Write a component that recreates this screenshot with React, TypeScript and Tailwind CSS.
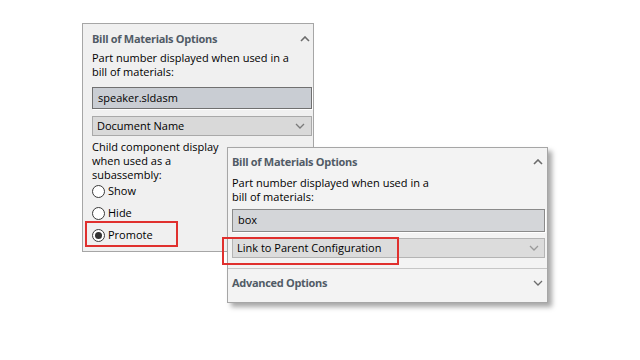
import React from "react";

const font = { fontFamily: '"Open Sans", "Noto Sans", sans-serif' };

function ChevronUp() {
  return (
    <svg width="10" height="6" viewBox="0 0 10 6" className="block">
      <path d="M1 5 L5 1 L9 5" fill="none" stroke="#6b6b6b" strokeWidth="1.6" />
    </svg>
  );
}

function ChevronDown({ color = "#7a7a7a" }: { color?: string }) {
  return (
    <svg width="10" height="6" viewBox="0 0 10 6" className="block">
      <path d="M1 1 L5 5 L9 1" fill="none" stroke={color} strokeWidth="1.3" />
    </svg>
  );
}

function Radio({ checked, label }: { checked?: boolean; label: string }) {
  return (
    <div className="flex h-[16px] items-center">
      <div className="flex h-[13px] w-[13px] items-center justify-center rounded-full border border-[#3a3a3a] bg-white">
        {checked && <div className="h-[7px] w-[7px] rounded-full bg-[#333333]" />}
      </div>
      <span className="ml-[3px] text-[11px] leading-[16px] text-black">{label}</span>
    </div>
  );
}

export default function App() {
  return (
    <div className="relative h-[360px] w-[640px] overflow-hidden bg-white" style={font}>
      {/* Panel 1 */}
      <div className="ml-[82px] mt-[23px] flex h-[229px] w-[232px] flex-col border border-[#a6a6a6] bg-[#f0f0f0] pl-[9px] pr-[1px] pt-[7px]">
        <div className="flex h-[16px] items-center justify-between">
          <span className="text-[11px] font-bold leading-[16px] tracking-[-0.3px] text-[#515b66]">Bill of Materials Options</span>
          <div className="mr-[2px]">
            <ChevronUp />
          </div>
        </div>
        <div className="mt-[4px] text-[11px] leading-[14px] text-black">
          <div>Part number displayed when used in a</div>
          <div>bill of materials:</div>
        </div>
        <div className="mt-[8px] flex h-[22px] items-center border border-[#707070] bg-[#c9cdd3] pl-[5px] text-[11px] text-black shadow-[1px_1px_0_#ffffff]">
          speaker.sldasm
        </div>
        <div className="mt-[7px] flex h-[20px] items-center justify-between border border-[#a9a9a9] bg-[#d9d9d9] pl-[4px] pr-[6px] text-[11px] text-black">
          <span>Document Name</span>
          <ChevronDown />
        </div>
        <div className="mt-[4px] text-[11px] leading-[14px] text-black">
          <div>Child component display</div>
          <div>when used as a</div>
          <div>subassembly:</div>
        </div>
        <div className="mt-[1px] flex flex-col gap-[6px]">
          <Radio label="Show" />
          <Radio label="Hide" />
          <Radio label="Promote" checked />
        </div>
      </div>

      {/* Red highlight on Promote */}
      <div className="absolute left-[85px] top-[221px] h-[26px] w-[93px] border-2 border-[#e0302e]" />

      {/* Panel 2 */}
      <div className="absolute left-[227px] top-[147px] flex h-[156px] w-[321px] flex-col border border-[#a6a6a6] bg-[#f3f3f3] pt-[6px] shadow-[4px_4px_5px_rgba(0,0,0,0.35)]">
        <div className="flex h-[16px] items-center justify-between pl-[4px] pr-[3px]">
          <span className="text-[11px] font-bold leading-[16px] tracking-[-0.3px] text-[#515b66]">Bill of Materials Options</span>
          <div className="mr-[1px]">
            <ChevronUp />
          </div>
        </div>
        <div className="mt-[6px] pl-[4px] text-[11px] leading-[14px] text-black">
          <div>Part number displayed when used in a</div>
          <div>bill of materials:</div>
        </div>
        <div className="ml-[4px] mr-[2px] mt-[5px] flex h-[23px] items-center border border-[#8a8a8a] bg-[#d4d6d9] pl-[5px] text-[11px] text-black shadow-[1px_1px_0_#ffffff]">
          box
        </div>
        <div className="ml-[4px] mr-[2px] mt-[6px] flex h-[20px] items-center justify-between border border-[#b4b4b4] bg-[#dcdcdc] pl-[4px] pr-[5px] text-[11px] text-black">
          <span>Link to Parent Configuration</span>
          <ChevronDown color="#9a9a9a" />
        </div>
        <div className="mt-[10px] h-px w-full bg-[#c6c6c6]" />
        <div className="mt-[6px] flex h-[16px] items-center justify-between pl-[4px] pr-[3px]">
          <span className="text-[11px] font-bold leading-[16px] tracking-[-0.3px] text-[#515b66]">Advanced Options</span>
          <div className="mr-[1px]">
            <ChevronDown color="#6b6b6b" />
          </div>
        </div>
      </div>

      {/* Red highlight on Link to Parent Configuration */}
      <div className="absolute left-[222px] top-[237px] h-[28px] w-[177px] border-2 border-[#e0302e]" />
    </div>
  );
}
